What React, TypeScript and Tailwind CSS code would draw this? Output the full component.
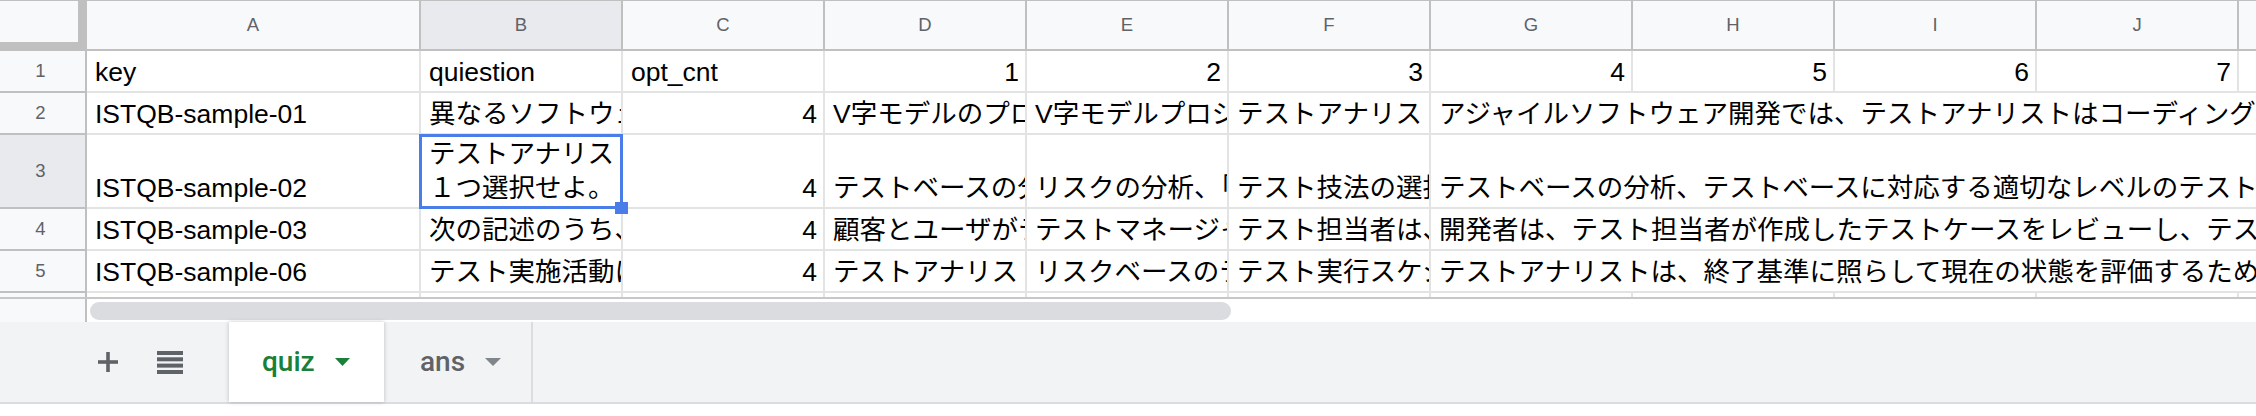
import React from "react";

const colW = [
  "w-[334px]",
  "w-[202px]",
  "w-[202px]",
  "w-[202px]",
  "w-[202px]",
  "w-[202px]",
  "w-[202px]",
  "w-[202px]",
  "w-[202px]",
  "w-[202px]",
  "w-[202px]",
];
const letters = ["A", "B", "C", "D", "E", "F", "G", "H", "I", "J", "K"];

const cellBase =
  "shrink-0 flex items-end border-r-2 border-b-2 border-[#e2e3e3] overflow-hidden whitespace-nowrap text-[26.5px] leading-[30px] text-black pb-[4px]";

type Row = {
  n: number;
  a: string;
  b: string;
  d: string;
  e: string;
  f: string;
  g: string;
};

const rows: Row[] = [
  {
    n: 2,
    a: "ISTQB-sample-01",
    b: "異なるソフトウェア開発ライフサイクルモデル",
    d: "V字モデルのプロセスでは",
    e: "V字モデルプロジェクトでは",
    f: "テストアナリストは",
    g: "アジャイルソフトウェア開発では、テストアナリストはコーディングと並行してテスト分析を行う。",
  },
  {
    n: 3,
    a: "ISTQB-sample-02",
    b: "",
    d: "テストベースの分析",
    e: "リスクの分析、「",
    f: "テスト技法の選択",
    g: "テストベースの分析、テストベースに対応する適切なレベルのテスト設計",
  },
  {
    n: 4,
    a: "ISTQB-sample-03",
    b: "次の記述のうち、",
    d: "顧客とユーザがテスト",
    e: "テストマネージャは",
    f: "テスト担当者は、",
    g: "開発者は、テスト担当者が作成したテストケースをレビューし、テストする。",
  },
  {
    n: 5,
    a: "ISTQB-sample-06",
    b: "テスト実施活動には",
    d: "テストアナリストは",
    e: "リスクベースのテスト",
    f: "テスト実行スケジュール",
    g: "テストアナリストは、終了基準に照らして現在の状態を評価するために",
  },
];

function RowHeader({ n, tall, selected }: { n: number; tall?: boolean; selected?: boolean }) {
  return (
    <div
      className={
        "w-[87px] shrink-0 flex items-center justify-center border-r-2 border-b-2 border-[#c0c0c0] text-[18.5px] text-[#5f6368] " +
        (selected ? "bg-[#e8eaed]" : "bg-[#f8f9fa]") +
        (tall ? " h-[74px]" : " h-[42px]")
      }
    >
      <span className="pr-[4px]">{n}</span>
    </div>
  );
}

export default function App() {
  return (
    <div className="w-[2256px] h-[416px] overflow-hidden bg-white font-['Liberation_Sans','Noto_Sans_CJK_JP',sans-serif]">
      <div className="relative">
        {/* column header */}
        <div className="flex h-[51px] border-t border-b-2 border-[#c0c0c0] bg-[#f8f9fa]">
          <div className="w-[87px] shrink-0 h-full bg-[#c0c0c0]">
            <div className="w-[78px] h-[41px] bg-[#f8f9fa]" />
          </div>
          {letters.map((l, i) => (
            <div
              key={l}
              className={
                colW[i] +
                " shrink-0 h-full flex items-center justify-center border-r-2 border-[#c0c0c0] text-[18.5px] text-[#5f6368] " +
                (i === 1 ? "bg-[#e8eaed]" : "bg-[#f8f9fa]")
              }
            >
              {l}
            </div>
          ))}
        </div>

        {/* row 1 */}
        <div className="flex h-[42px]">
          <RowHeader n={1} />
          <div className={cellBase + " w-[334px] pl-[8px]"}>key</div>
          <div className={cellBase + " w-[202px] pl-[8px]"}>quiestion</div>
          <div className={cellBase + " w-[202px] pl-[8px]"}>opt_cnt</div>
          {["1", "2", "3", "4", "5", "6", "7"].map((v) => (
            <div key={v} className={cellBase + " w-[202px] justify-end pr-[6px]"}>
              {v}
            </div>
          ))}
          <div className={cellBase + " w-[202px]"} />
        </div>

        {rows.map((r) => {
          const tall = r.n === 3;
          return (
            <div key={r.n} className={"flex " + (tall ? "h-[74px]" : "h-[42px]")}>
              <RowHeader n={r.n} tall={tall} selected={tall} />
              <div className={cellBase + " w-[334px] pl-[8px]"}>{r.a}</div>
              {tall ? (
                <div className="w-[202px] shrink-0 flex flex-col justify-end border-r-2 border-b-2 border-[#e2e3e3] overflow-hidden whitespace-nowrap text-[26.5px] leading-[34px] text-black pl-[8px] pb-[2px]">
                  <div>テストアナリス</div>
                  <div>１つ選択せよ。</div>
                </div>
              ) : (
                <div className={cellBase + " w-[202px] pl-[8px]"}>{r.b}</div>
              )}
              <div className={cellBase + " w-[202px] justify-end pr-[6px]"}>4</div>
              <div className={cellBase + " w-[202px] pl-[8px]"}>{r.d}</div>
              <div className={cellBase + " w-[202px] pl-[8px]"}>{r.e}</div>
              <div className={cellBase + " w-[202px] pl-[8px]"}>{r.f}</div>
              <div className="flex-1 min-w-0 flex items-end border-b-2 border-[#e2e3e3] overflow-hidden whitespace-nowrap text-[26.5px] leading-[30px] text-black pb-[4px] pl-[8px]">
                {r.g}
              </div>
            </div>
          );
        })}

        {/* partial row 6 */}
        <div className="flex h-[4px]">
          <div className="w-[87px] shrink-0 h-full bg-[#f8f9fa] border-r-2 border-[#c0c0c0]" />
          {colW.map((w, i) => (
            <div key={i} className={w + " shrink-0 h-full border-r-2 border-[#e2e3e3]"} />
          ))}
        </div>
        <div className="h-[2px] bg-[#c7c7c7]" />

        {/* horizontal scrollbar */}
        <div className="flex h-[23px]">
          <div className="w-[87px] shrink-0 h-full bg-[#f8f9fa] border-r-2 border-[#c0c0c0]" />
          <div className="flex-1 h-full bg-white pl-[3px] pt-[3px]">
            <div className="w-[1141px] h-[18px] rounded-full bg-[#dadce0]" />
          </div>
        </div>

        {/* selection */}
        <div className="absolute left-[419px] top-[134px] w-[204px] h-[75px] border-[3px] border-[#4a7de8] pointer-events-none" />
        <div className="absolute left-[615px] top-[202px] w-[13px] h-[12px] bg-[#4a7de8]" />
      </div>

      {/* sheet tabs */}
      <div className="flex h-[80px] bg-[#f1f3f4] font-['Roboto',sans-serif]">
        <div className="w-[229px] shrink-0 h-full flex items-center pl-[98px]">
          <svg width="20" height="20" viewBox="0 0 20 20">
            <rect x="8.2" y="0" width="3.6" height="20" fill="#5f6368" />
            <rect x="0" y="8.2" width="20" height="3.6" fill="#5f6368" />
          </svg>
          <svg width="26" height="23" viewBox="0 0 26 23" className="ml-[39px]">
            <rect x="0" y="0" width="26" height="4" fill="#5f6368" />
            <rect x="0" y="6.3" width="26" height="4" fill="#5f6368" />
            <rect x="0" y="12.6" width="26" height="4" fill="#5f6368" />
            <rect x="0" y="19" width="26" height="4" fill="#5f6368" />
          </svg>
        </div>
        <div className="relative z-10 w-[155px] shrink-0 h-full bg-white flex items-center pl-[33px] gap-[20px] shadow-[0_0_4px_rgba(60,64,67,0.3)]">
          <span className="text-[28px] font-medium text-[#188038] leading-none">quiz</span>
          <svg width="15" height="8" viewBox="0 0 15 8">
            <path d="M0 0 L15 0 L7.5 8 Z" fill="#188038" />
          </svg>
        </div>
        <div className="w-[149px] shrink-0 h-full flex items-center pl-[36px] gap-[20px] border-r-2 border-[#dadce0]">
          <span className="text-[28px] font-medium text-[#5f6368] leading-none">ans</span>
          <svg width="16" height="8" viewBox="0 0 16 8">
            <path d="M0 0 L16 0 L8 8 Z" fill="#80868b" />
          </svg>
        </div>
        <div className="flex-1" />
      </div>
      <div className="h-[2px] bg-[#dadce0]" />
      <div className="h-[12px] bg-white" />
    </div>
  );
}
